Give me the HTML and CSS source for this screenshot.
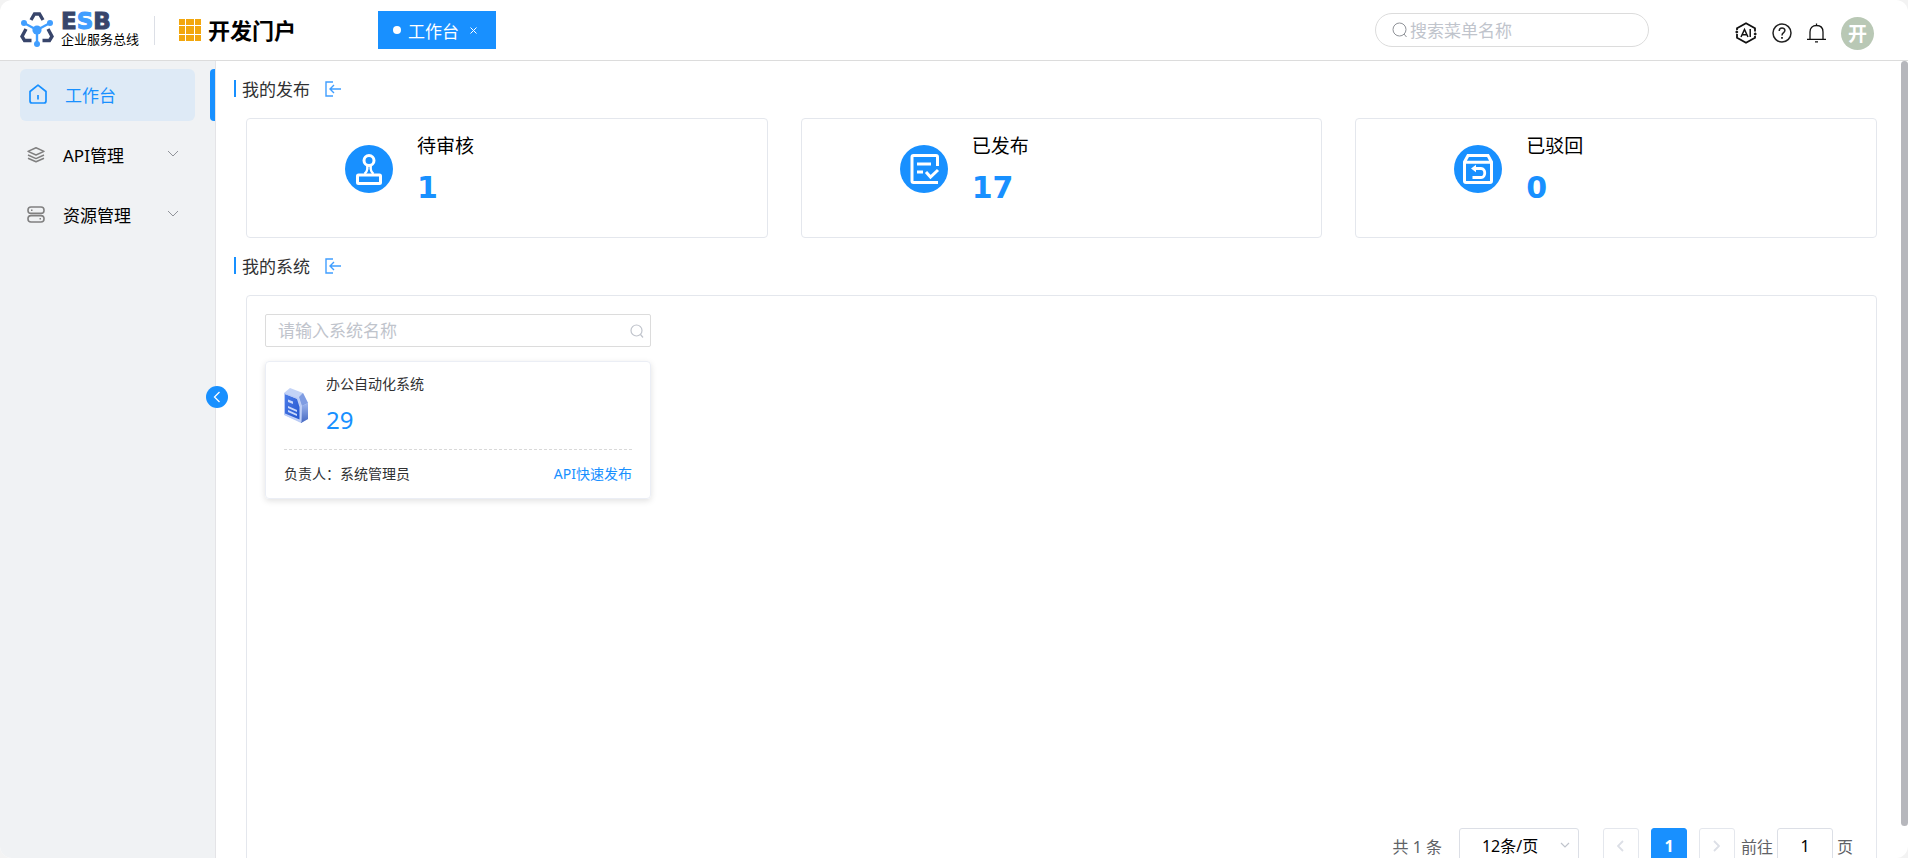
FILE: index.html
```
<!DOCTYPE html>
<html lang="zh-CN">
  <head>
    <title>开发门户</title>
    <meta charset="UTF-8">
    <link rel="stylesheet" href="styles.css">
  </head>
  <body>
    <div class="app">
      <header class="header">
        <a class="logo" href="#">
          <svg width="34" height="36" viewBox="0 0 34 36" fill="none">
            <g stroke="#38456b" stroke-width="3.4">
              <path d="M11 8 L14.5 2 H19.5 L23 8"/>
              <path d="M6 17 L2 24.5 L4.5 28.5 H11.5"/>
              <path d="M28 17 L32 24.5 L29.5 28.5 H22.5"/>
            </g>
            <path d="M4 11 L17 18 L30 11 M17 18 V32" stroke="#409eff" stroke-width="2.4"/>
            <g fill="#409eff">
              <circle cx="17" cy="18" r="4.6"/>
              <circle cx="4" cy="11" r="3"/>
              <circle cx="30" cy="11" r="3"/>
              <circle cx="17" cy="32" r="3"/>
            </g>
          </svg>
          <span class="logo-text">
            <span class="logo-name">E<span class="logo-s">S</span>B</span>
            <span class="logo-sub">企业服务总线</span>
          </span>
        </a>
        <span class="divider"></span>
        <div class="portal">
          <svg width="22" height="22" viewBox="0 0 22 22" fill="#f2a60d">
            <path d="M0 0h6v6H0zM7 0h8v6H7zM16 0h6v6h-6zM0 7h6v8H0zM7 7h8v8H7zM16 7h6v8h-6zM0 16h6v6H0zM7 16h8v6H7zM16 16h6v6h-6z"/>
          </svg>
          <h1>开发门户</h1>
        </div>
        <div class="tab">
          <span class="tab-dot"></span>
          <span>工作台</span>
          <button class="tab-close" aria-label="关闭">
            <svg width="7" height="7" viewBox="0 0 7 7" stroke="#fff" fill="none"><path d="M.5 .5l6 6M6.5 .5l-6 6"/></svg>
          </button>
        </div>
        <div class="menu-search">
          <svg width="16" height="16" viewBox="0 0 16 16" stroke="#909399" fill="none"><circle cx="7.5" cy="7.5" r="6.5"/><path d="M12 12l2.5 3"/></svg>
          <input type="text" aria-label="搜索菜单名称" placeholder="搜索菜单名称">
        </div>
        <div class="actions">
          <button aria-label="AI">
            <svg width="22" height="22" viewBox="0 0 22 22" stroke="#111" fill="none" stroke-width="1.8">
              <path d="M2 8V6.2L11 1.2L20 6.2V9.5M20 14V15.8L11 20.8L2 15.8V12"/>
              <circle cx="1.8" cy="10" r="1" fill="#111" stroke-width="1"/>
              <circle cx="20.2" cy="12" r="1" fill="#111" stroke-width="1"/>
              <path d="M6 15L9.5 7.5L13 15M7.2 12.8H11.8M15.2 7V15" stroke-width="1.5"/>
            </svg>
          </button>
          <button aria-label="帮助">
            <svg width="20" height="20" viewBox="0 0 20 20" stroke="#222" fill="none" stroke-width="1.5">
              <circle cx="10" cy="10" r="9"/>
              <path d="M7.2 8C7.2 4 12.9 4.2 12.9 7.6C12.9 9.8 10 9.6 10 12.5"/>
              <path d="M10 14v1.8" stroke-width="1.8"/>
            </svg>
          </button>
          <button aria-label="通知">
            <svg width="19" height="20" viewBox="0 0 19 20" stroke="#111" fill="none" stroke-width="1.3">
              <path d="M3 16V9C3 5 5.5 2.5 9.5 2.5S16 5 16 9V16M0 16.3H19M9.5 .5V2.5M8 18.9H11"/>
            </svg>
          </button>
          <button class="avatar">开</button>
        </div>
      </header>

      <div class="body">
        <nav class="sidebar">
          <a class="menu-item active" href="#">
            <svg width="18" height="20" viewBox="0 0 18 20" stroke="#1890ff" fill="none" stroke-width="1.7" stroke-linejoin="round"><path d="M1 7.5L9 1.2L17 7.5V17Q17 19 15 19H3Q1 19 1 17Z"/><path d="M9 11v4.5"/></svg>
            <span>工作台</span>
          </a>
          <a class="menu-item" href="#">
            <svg width="18" height="18" viewBox="0 0 18 18" stroke="#808080" fill="none" stroke-width="1.5" stroke-linejoin="round"><path d="M9 2.8L17 6.4L9 10L1 6.4ZM1 10L9 13.6L17 10M1 13.2L9 16.8L17 13.2"/></svg>
            <span>API管理</span>
            <svg class="arrow" width="12" height="8" viewBox="0 0 12 8" stroke="#909399" fill="none"><path d="M1 1l5 5l5-5"/></svg>
          </a>
          <a class="menu-item" href="#">
            <svg width="18" height="18" viewBox="0 0 18 18" stroke="#808080" fill="none" stroke-width="1.6"><rect x="1" y="2" width="16" height="6.4" rx="3"/><rect x="1" y="10.6" width="16" height="6.4" rx="3"/><path d="M4 5.2h1.5M12.5 13.8H14"/></svg>
            <span>资源管理</span>
            <svg class="arrow" width="12" height="8" viewBox="0 0 12 8" stroke="#909399" fill="none"><path d="M1 1l5 5l5-5"/></svg>
          </a>
          <button class="collapse" aria-label="收起菜单">
            <svg width="8" height="12" viewBox="0 0 8 12" stroke="#fff" fill="none" stroke-width="1.3"><path d="M6.5 1L1.5 6l5 5"/></svg>
          </button>
        </nav>

        <main class="main">
          <h2 class="section-title">
            <span>我的发布</span>
            <svg width="16" height="16" viewBox="0 0 16 16" stroke="#409eff" fill="none" stroke-width="1.4"><path d="M8 1H1V15H8M16 8H5M9 4L5 8L9 12"/></svg>
          </h2>
          <div class="stats">
            <div class="stat">
              <svg width="48" height="48" viewBox="0 0 48 48" fill="none" stroke="#fff" stroke-width="3">
                <circle cx="24" cy="24" r="24" fill="#1890ff" stroke="none"/>
                <circle cx="24" cy="15.5" r="5"/>
                <path d="M22.3 20V24Q22 27 19.5 29M25.7 20V24Q26 27 28.5 29" stroke-width="2.4"/>
                <rect x="12.5" y="30" width="23" height="8.5" rx="1"/>
              </svg>
              <div>
                <div class="stat-label">待审核</div>
                <div class="stat-value">1</div>
              </div>
            </div>
            <div class="stat">
              <svg width="48" height="48" viewBox="0 0 48 48" fill="none" stroke="#fff" stroke-width="3">
                <circle cx="24" cy="24" r="24" fill="#1890ff" stroke="none"/>
                <path d="M37.5 21V12Q37.5 10.5 36 10.5H13.5Q12 10.5 12 12V36Q12 37.5 13.5 37.5H38"/>
                <path d="M17 19H31M17 27H23M26 27L30.5 32L38 25"/>
              </svg>
              <div>
                <div class="stat-label">已发布</div>
                <div class="stat-value">17</div>
              </div>
            </div>
            <div class="stat">
              <svg width="48" height="48" viewBox="0 0 48 48" fill="none" stroke="#fff" stroke-width="3">
                <circle cx="24" cy="24" r="24" fill="#1890ff" stroke="none"/>
                <path d="M14 10.5H34L37.5 17V36Q37.5 37.5 36 37.5H12Q10.5 37.5 10.5 36V17ZM10.5 17.3H37.5"/>
                <path d="M19 23.5H27C32 23.5 32 32.5 27 32.5H18.5" stroke-width="2.8"/>
                <path d="M17 23.5L22 19.8V27.2Z" fill="#fff" stroke="none"/>
              </svg>
              <div>
                <div class="stat-label">已驳回</div>
                <div class="stat-value">0</div>
              </div>
            </div>
          </div>

          <h2 class="section-title">
            <span>我的系统</span>
            <svg width="16" height="16" viewBox="0 0 16 16" stroke="#409eff" fill="none" stroke-width="1.4"><path d="M8 1H1V15H8M16 8H5M9 4L5 8L9 12"/></svg>
          </h2>
          <div class="panel">
            <div class="system-search">
              <input type="text" aria-label="系统名称" placeholder="请输入系统名称">
              <svg width="14" height="14" viewBox="0 0 14 14" stroke="#c0c4cc" fill="none" stroke-width="1.2"><circle cx="6.5" cy="6.5" r="5.5"/><path d="M10.5 10.5l2.5 3"/></svg>
            </div>
            <div class="system-card">
              <div class="system-top">
                <svg width="25" height="36" viewBox="0 0 25 36">
                  <defs>
                    <linearGradient id="side" x1="0" y1="0" x2="0" y2="1">
                      <stop offset="0" stop-color="#9db5ee"/>
                      <stop offset="1" stop-color="#4467c0"/>
                    </linearGradient>
                    <linearGradient id="face" x1="0" y1="0" x2="1" y2="1">
                      <stop offset="0" stop-color="#4a7be8"/>
                      <stop offset="1" stop-color="#2657cf"/>
                    </linearGradient>
                  </defs>
                  <path d="M0 5L6 0L19 5L24 15V31L17 35L0 27Z" fill="#c3d3f7"/>
                  <path d="M15 9L19 5L24 15L18 18Z" fill="#7f9ce2"/>
                  <path d="M18 18L24 15V31L17 35Z" fill="url(#side)"/>
                  <path d="M1 6L13 11L15.5 19V31.5L1 25.5Z" fill="url(#face)"/>
                  <path d="M.5 5.5L14 10.5L17 18.5V34L.5 26.5Z" fill="none" stroke="#b9caf6"/>
                  <path d="M4 11.5L9 13.5V16L4 14ZM4 18L13 22V24L4 20ZM4 22L13 26V28L4 24Z" fill="#c9d8fb"/>
                </svg>
                <div>
                  <div class="system-name">办公自动化系统</div>
                  <div class="system-count">29</div>
                </div>
              </div>
              <div class="system-bottom">
                <span>负责人：系统管理员</span>
                <a href="#">API快速发布</a>
              </div>
            </div>
            <div class="pagination">
              <span class="total">共 1 条</span>
              <span class="page-size">
                <select aria-label="每页条数">
                  <option>12条/页</option>
                </select>
                <svg width="10" height="7" viewBox="0 0 10 7" stroke="#c0c4cc" fill="none" stroke-width="1.2"><path d="M1 1l4 4l4-4"/></svg>
              </span>
              <button class="page" disabled aria-label="上一页">
                <svg width="7" height="12" viewBox="0 0 7 12" stroke="#dcdfe6" fill="none" stroke-width="1.8"><path d="M6 1L1 6l5 5"/></svg>
              </button>
              <button class="page current">1</button>
              <button class="page" disabled aria-label="下一页">
                <svg width="7" height="12" viewBox="0 0 7 12" stroke="#dcdfe6" fill="none" stroke-width="1.8"><path d="M1 1l5 5l-5 5"/></svg>
              </button>
              <label class="jump">前往<input type="text" value="1">页</label>
            </div>
          </div>
        </main>
        <div class="scrollbar"></div>
      </div>
    </div>
  </body>
</html>
```
FILE: styles.css
```
* {
  box-sizing: border-box;
}

body {
  margin: 0;
  background-color: #f3f3f3;
  color: #000;
  font-family: "Noto Sans", "Noto Sans CJK SC", sans-serif;
  font-size: 17px;
}

h1,
h2 {
  margin: 0;
}

a {
  color: inherit;
  text-decoration: none;
}

button,
input,
select {
  margin: 0;
  padding: 0;
  border: none;
  outline: none;
  background: none;
  color: inherit;
  font-family: inherit;
}

input::placeholder {
  color: #c0c4cc;
  opacity: 1;
}

svg {
  display: block;
  flex: none;
}

.app {
  display: flex;
  flex-direction: column;
  height: 100vh;
  overflow: hidden;
  border-radius: 12px;
  background-color: #fff;
}

/* header */
.header {
  display: flex;
  align-items: center;
  flex: none;
  height: 61px;
  padding: 0 34px 0 20px;
  border-bottom: 1px solid #dcdcdc;
}

.logo {
  display: flex;
  gap: 7px;
}

.logo-text {
  display: flex;
  flex-direction: column;
  width: 78px;
}

.logo-name {
  color: #38456b;
  font-family: "DejaVu Sans", sans-serif;
  font-size: 23px;
  font-weight: bold;
  line-height: 18px;
  -webkit-text-stroke: 1px;
}

.logo-s {
  color: #409eff;
}

.logo-sub {
  font-size: 13px;
  line-height: 18px;
  white-space: nowrap;
}

.divider {
  width: 1px;
  height: 29px;
  margin: 0 24px 0 15px;
  background-color: #dcdfe6;
}

.portal {
  display: flex;
  align-items: center;
  gap: 7px;
}

.portal h1 {
  font-size: 22px;
  line-height: 32px;
}

.tab {
  display: flex;
  align-items: center;
  height: 38px;
  margin-left: 82px;
  padding: 0 19px 0 15px;
  background-color: #1890ff;
  color: #fff;
}

.tab-dot {
  width: 8px;
  height: 8px;
  margin-right: 7px;
  border-radius: 50%;
  background-color: #fff;
}

.tab-close {
  margin-left: 11px;
}

.menu-search {
  display: flex;
  align-items: center;
  gap: 2px;
  width: 274px;
  height: 34px;
  margin-left: auto;
  padding: 0 16px;
  border: 1px solid #dcdcdc;
  border-radius: 17px;
}

.menu-search input {
  width: 100%;
  font-size: 17px;
}

.actions {
  display: flex;
  align-items: center;
  gap: 15px;
  margin: 6px 0 0 86px;
}

.avatar {
  width: 33px;
  height: 33px;
  border-radius: 50%;
  background-color: #b9c8b5;
  color: #fff;
  font-size: 19px;
  font-weight: bold;
}

.body {
  position: relative;
  display: flex;
  flex: 1;
  min-height: 0;
}

/* sidebar */
.sidebar {
  position: relative;
  display: flex;
  flex-direction: column;
  gap: 8px;
  flex: none;
  width: 216px;
  padding: 8px 20px;
  border-right: 1px solid #e4e4e7;
  background-color: #f0f2f4;
}

.menu-item {
  position: relative;
  display: flex;
  align-items: center;
  gap: 18px;
  height: 52px;
  padding: 0 16px 2px 7px;
  border-radius: 6px;
}

.menu-item.active {
  padding-left: 9px;
  background-color: #deeaf6;
  color: #1890ff;
}

.menu-item.active::after {
  content: "";
  position: absolute;
  top: 0;
  right: -20px;
  width: 5px;
  height: 100%;
  border-radius: 4px 0 0 4px;
  background-color: #1890ff;
}

.arrow {
  margin-left: auto;
}

.collapse {
  position: absolute;
  top: 325px;
  right: -13px;
  display: flex;
  align-items: center;
  justify-content: center;
  width: 22px;
  height: 22px;
  border-radius: 50%;
  background-color: #1890ff;
}

/* content */
.main {
  flex: 1;
  padding: 13px 31px 10px 18px;
  overflow-y: auto;
  scrollbar-width: none;
}

.scrollbar {
  position: absolute;
  top: 0;
  right: 0;
  width: 7px;
  height: 96%;
  border-radius: 4px;
  background-color: #b6b7bc;
}

.section-title {
  display: flex;
  align-items: center;
  gap: 15px;
  height: 29px;
  color: #303133;
  font-size: 17px;
  font-weight: normal;
}

.section-title::before {
  content: "";
  width: 2px;
  height: 17px;
  margin-right: -9px;
  background-color: #1890ff;
}

.stats {
  display: flex;
  gap: 33px;
  margin: 15px 0 13px 12px;
}

.stat {
  display: flex;
  flex: 1;
  gap: 24px;
  height: 120px;
  padding: 12px 0 0 98px;
  border: 1px solid #e4e7ed;
  border-radius: 4px;
}

.stat svg {
  margin-top: 14px;
}

.stat-label {
  font-size: 19px;
  line-height: 30px;
}

.stat-value {
  color: #1890ff;
  font-family: "DejaVu Sans", sans-serif;
  font-size: 30px;
  font-weight: bold;
  line-height: 54px;
}

.panel {
  display: flex;
  flex-direction: column;
  min-height: calc(100vh - 269px);
  margin: 15px 0 0 12px;
  padding: 18px 18px 19px;
  border: 1px solid #e4e7ed;
  border-radius: 4px;
}

.system-search {
  display: flex;
  align-items: center;
  width: 386px;
  height: 33px;
  padding: 0 6px 0 12px;
  border: 1px solid #dcdcdc;
  border-radius: 2px;
}

.system-search input {
  flex: 1;
  font-size: 17px;
}

.system-card {
  width: 386px;
  margin-top: 14px;
  padding: 0 18px;
  border: 1px solid #ebeef5;
  border-radius: 4px;
  box-shadow: 0 2px 6px rgba(0, 0, 0, 0.12);
  color: #303133;
  font-size: 14px;
}

.system-top {
  display: flex;
  gap: 17px;
  height: 88px;
  padding-top: 12px;
  border-bottom: 1px dashed #d9d9d9;
}

.system-top svg {
  margin-top: 14px;
}

.system-name {
  line-height: 20px;
}

.system-count {
  color: #1890ff;
  font-size: 24px;
  line-height: 52px;
}

.system-bottom {
  display: flex;
  align-items: center;
  justify-content: space-between;
  height: 48px;
  padding-bottom: 2px;
}

.system-bottom a {
  color: #1890ff;
}

/* pagination */
.pagination {
  display: flex;
  align-items: center;
  justify-content: flex-end;
  margin-top: auto;
  padding-right: 5px;
  color: #606266;
  font-size: 16px;
}

.page-size {
  position: relative;
  margin: 0 24px 0 17px;
}

.page-size select {
  width: 120px;
  height: 36px;
  padding-left: 22px;
  border: 1px solid #dcdfe6;
  border-radius: 3px;
  appearance: none;
  color: #000;
  font-size: 16px;
}

.page-size svg {
  position: absolute;
  top: 14px;
  right: 9px;
  pointer-events: none;
}

.page {
  display: flex;
  align-items: center;
  justify-content: center;
  width: 36px;
  height: 36px;
  margin-right: 12px;
  border: 1px solid #e4e7ed;
  border-radius: 3px;
  font-size: 16px;
}

.page.current {
  border-color: #1890ff;
  background-color: #1890ff;
  color: #fff;
  font-weight: bold;
}

.jump {
  display: flex;
  align-items: center;
  gap: 4px;
  margin-left: -6px;
}

.jump input {
  width: 56px;
  height: 36px;
  border: 1px solid #dcdfe6;
  border-radius: 3px;
  color: #000;
  font-size: 16px;
  text-align: center;
}
```
